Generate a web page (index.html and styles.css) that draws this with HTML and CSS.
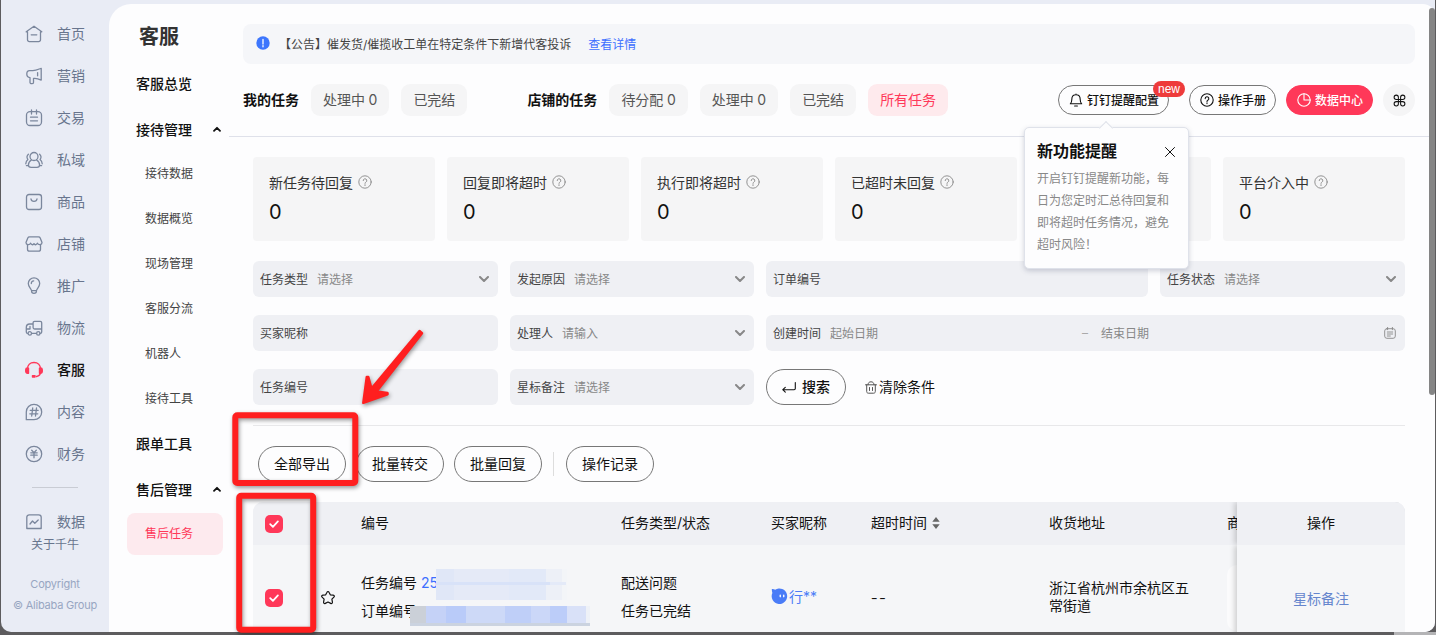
FILE: index.html
```html
<!DOCTYPE html>
<html lang="zh-CN">
<head>
    <meta charset="UTF-8">
    <meta name="viewport" content="width=device-width, initial-scale=1.0">
    <title>客服 - 售后任务</title>
    <link rel="stylesheet" href="styles.css">
</head>
<body>

    <svg width="0" height="0" class="sprite">
        <symbol id="i-help" viewBox="0 0 14 14">
            <circle cx="7" cy="7" r="6.2"/>
            <path d="M5.2 5.6a1.8 1.8 0 1 1 2.6 1.6c-.6.3-.8.6-.8 1.2M7 9.7v.9"/>
        </symbol>
        <symbol id="i-down" viewBox="0 0 10 6">
            <path d="M1 1l4 4 4-4"/>
        </symbol>
        <symbol id="i-up" viewBox="0 0 8 6">
            <path d="M1 4.8l3-3 3 3"/>
        </symbol>
        <symbol id="i-check" viewBox="0 0 18 18">
            <path d="M5.2 9.2l2.7 2.6 5-5.4"/>
        </symbol>
    </svg>

    <div class="window">
        <nav class="menu">
            <a class="menu-item">
                <svg viewBox="0 0 18 18"><path d="M9 1.2L1.2 6.8h1.3v8a1.8 1.8 0 0 0 1.8 1.8h9.4a1.8 1.8 0 0 0 1.8-1.8v-8h1.3zM6.2 9.8h5.6"/></svg>
                <span>首页</span>
            </a>
            <a class="menu-item">
                <svg viewBox="0 0 18 18"><path d="M4.500 3.600h3.300c2.800 0 5-1 8.400-2.300v11.800c-2.500-1.200-4.800-1.700-6.400-1.700H8.500v4c0 1.700-3.500 1.700-3.500 0v-4.800C2.900 10.400 1.800 9 1.800 7c0-2 1.200-3.400 2.700-3.400zM12.600 5.600v3.200"/></svg>
                <span>营销</span>
            </a>
            <a class="menu-item">
                <svg viewBox="0 0 18 18"><rect x="1.5" y="2.6" width="15" height="13.9" rx="3.5"/><path d="M6.500 1v4M11.500 1v4M5.500 8.200h7M5.500 11.800h7"/></svg>
                <span>交易</span>
            </a>
            <a class="menu-item">
                <svg viewBox="0 0 18 18"><circle cx="9" cy="5.500" r="4"/><path d="M6.400 9c-2 1.200-3 3-3 5 0 1.800 1.200 2.300 2.700 2.300h5.800c1.500 0 2.700-.5 2.700-2.300 0-2-1-3.800-3-5M3.400 3.200c-1.800 1.600-1.800 3.800-.5 5.200C1.300 9.700.8 11 .8 12.800M14.600 3.200c1.800 1.600 1.800 3.800.5 5.200 1.600 1.300 2.100 2.600 2.100 4.400M1.400 14.600h2M14.600 14.600h2"/></svg>
                <span>私域</span>
            </a>
            <a class="menu-item">
                <svg viewBox="0 0 18 18"><rect x="1.5" y="1.5" width="15" height="15" rx="2.5"/><path d="M6 6c.4 3.200 5.600 3.200 6 0"/></svg>
                <span>商品</span>
            </a>
            <a class="menu-item">
                <svg viewBox="0 0 18 18"><path d="M4.500 1.800h9c.8 0 1.400.4 1.700 1.100L17 7.400c0 2.600-3.600 3-4.600.8-1 2-2.700 2-3.400.4-.7 1.600-2.400 1.600-3.400-.4C4.600 10.400 1 10 1 7.400l1.800-4.500c.3-.7.9-1.100 1.700-1.100zM2.500 9.700v4.500c0 1.200.8 2 2 2h9c1.200 0 2-.8 2-2V9.700"/></svg>
                <span>店铺</span>
            </a>
            <a class="menu-item">
                <svg viewBox="0 0 18 18"><path d="M6.600 13.600C5.800 11 3.300 9.600 3.300 6.600a5.700 5.700 0 0 1 11.400 0c0 3-2.500 4.400-3.300 7zM6.600 13.600v1c0 1 .8 1.800 2.400 1.800s2.400-.8 2.400-1.800v-1M6.300 6.500c0-1.500 1-2.500 2.400-2.600"/></svg>
                <span>推广</span>
            </a>
            <a class="menu-item">
                <svg viewBox="0 0 18 18"><path d="M7.500 5H4.700C2.500 5 1.300 6.400 1.300 8.500V13c0 .8.5 1.300 1.300 1.300M7 14.300h4.500M15 14.300h.3c.8 0 1.400-.5 1.400-1.300V3.800c0-.9-.6-1.500-1.500-1.500H9.600c-.9 0-1.500.6-1.500 1.500v4.700c0 .9.6 1.500 1.500 1.500h7M1.300 10H5V7.500"/><circle cx="4.8" cy="14.4" r="1.7"/><circle cx="13.3" cy="14.4" r="1.7"/></svg>
                <span>物流</span>
            </a>
            <a class="menu-item active">
                <svg viewBox="0 0 18 18"><path d="M2.500 8C2.500 4 5.200 1.500 9 1.500S15.500 4 15.500 8v3c0 2.300-1.500 4-4 4.500"/><path class="fill" d="M1.300 7.200h2.200v5h-.8c-1.500 0-2-1-2-2.500s.1-1.900.6-2.500zM16.700 7.200h-2.200v5h.8c1.500 0 2-1 2-2.500s-.1-1.900-.6-2.500zM7.500 14.600H10v1.500H7.500z"/></svg>
                <span>客服</span>
            </a>
            <a class="menu-item">
                <svg viewBox="0 0 18 18"><path d="M1.300 16.700V9a7.700 7.700 0 1 1 7.700 7.700zM7.700 5l-1 8M11.500 5l-1 8M5.200 7.300h8M4.800 10.800h8"/></svg>
                <span>内容</span>
            </a>
            <a class="menu-item">
                <svg viewBox="0 0 18 18"><circle cx="9" cy="9" r="7.7"/><path d="M6.700 5.200L9 7.600l2.300-2.400M5.800 7.800h6.400M5.800 10.200h6.400M9 7.800v5"/></svg>
                <span>财务</span>
            </a>
            <hr class="menu-line">
            <a class="menu-item last">
                <svg viewBox="0 0 18 18"><path d="M1.800 15.500V4.300c0-1.500 1-2.500 2.500-2.500h9.400c1.500 0 2.500 1 2.500 2.500v11.200M2.500 15.500h13M5 11l2.500-3 2.300 2.300L13.200 7"/></svg>
                <span>数据</span>
            </a>
            <div class="about">关于千牛</div>
            <div class="copyright">Copyright<br>© Alibaba Group</div>
        </nav>

        <div class="page">
            <aside class="side">
                <h1>客服</h1>
                <a class="side-item">客服总览</a>
                <a class="side-item">接待管理 <svg><use href="#i-up"/></svg></a>
                <div class="side-sub">
                    <a>接待数据</a>
                    <a>数据概览</a>
                    <a>现场管理</a>
                    <a>客服分流</a>
                    <a>机器人</a>
                    <a>接待工具</a>
                </div>
                <a class="side-item">跟单工具</a>
                <a class="side-item">售后管理 <svg><use href="#i-up"/></svg></a>
                <a class="side-active">售后任务</a>
            </aside>

            <main class="content">
                <div class="notice">
                    <svg viewBox="0 0 14 14"><circle cx="7" cy="7" r="6.7"/><path d="M7 3.400v4.700M7 9.600v1.200"/></svg>
                    <span>【公告】催发货/催揽收工单在特定条件下新增代客投诉</span>
                    <a>查看详情</a>
                </div>

                <div class="toolbar">
                    <div class="tabs">
                        <b>我的任务</b>
                        <a>处理中 0</a>
                        <a>已完结</a>
                        <b class="shop">店铺的任务</b>
                        <a>待分配 0</a>
                        <a>处理中 0</a>
                        <a>已完结</a>
                        <a class="on">所有任务</a>
                    </div>
                    <div class="tools">
                        <div class="tool ding">
                            <svg viewBox="0 0 14 14"><path d="M7 1v.8M1.300 10.800c1.200-1 1.500-2 1.500-4.300C2.800 3.800 4.500 1.800 7 1.800s4.200 2 4.200 4.700c0 2.300.3 3.300 1.500 4.300zM5.600 13h2.800"/></svg>
                            <span>钉钉提醒配置</span>
                            <em class="new">new</em>
                            <div class="popover">
                                <div class="popover-head">
                                    <h3>新功能提醒</h3>
                                    <svg viewBox="0 0 10 10"><path d="M.5.5l9 9M9.500.5l-9 9"/></svg>
                                </div>
                                <p>开启钉钉提醒新功能，每日为您定时汇总待回复和即将超时任务情况，避免超时风险！</p>
                            </div>
                        </div>
                        <div class="tool"><svg><use href="#i-help"/></svg><span>操作手册</span></div>
                        <div class="tool primary">
                            <svg viewBox="0 0 14 14"><circle cx="7" cy="7" r="6.2"/><path d="M7 .8V7h6.200"/></svg>
                            <span>数据中心</span>
                        </div>
                        <div class="more">
                            <svg viewBox="0 0 14 14"><path d="M5.800 8.200V3.500a2.300 2.300 0 1 0-2.300 2.300h7a2.300 2.300 0 1 0-2.300-2.300v7a2.300 2.300 0 1 0 2.300-2.300h-7a2.300 2.300 0 1 0 2.300 2.300z"/></svg>
                        </div>
                    </div>
                </div>

                <div class="body">
                    <div class="cards">
                        <div class="card"><div>新任务待回复 <svg><use href="#i-help"/></svg></div><strong>0</strong></div>
                        <div class="card"><div>回复即将超时 <svg><use href="#i-help"/></svg></div><strong>0</strong></div>
                        <div class="card"><div>执行即将超时 <svg><use href="#i-help"/></svg></div><strong>0</strong></div>
                        <div class="card"><div>已超时未回复 <svg><use href="#i-help"/></svg></div><strong>0</strong></div>
                        <div class="card"></div>
                        <div class="card"><div>平台介入中 <svg><use href="#i-help"/></svg></div><strong>0</strong></div>
                    </div>

                    <div class="filters">
                        <div class="field">任务类型 <i>请选择</i><svg class="arrow"><use href="#i-down"/></svg></div>
                        <div class="field">发起原因 <i>请选择</i><svg class="arrow"><use href="#i-down"/></svg></div>
                        <div class="field">订单编号</div>
                        <div class="field">任务状态 <i>请选择</i><svg class="arrow"><use href="#i-down"/></svg></div>
                        <div class="field">买家昵称</div>
                        <div class="field">处理人 <i>请输入</i><svg class="arrow"><use href="#i-down"/></svg></div>
                        <div class="field date">
                            创建时间 <i>起始日期</i><i class="dash">–</i><i class="end">结束日期</i>
                            <svg class="calendar" viewBox="0 0 12 12"><rect x=".7" y="1.7" width="10.6" height="9.6" rx="2.2"/><path d="M3.600.3v2.400M8.400.3v2.400M3.300 5h5.400M3.300 7h5.400M3.300 9h3"/></svg>
                        </div>
                        <div class="field">任务编号</div>
                        <div class="field">星标备注 <i>请选择</i><svg class="arrow"><use href="#i-down"/></svg></div>
                        <div class="actions">
                            <button class="btn search">
                                <svg viewBox="0 0 14 12"><path d="M13.300 1.500v6c0 .8-.4 1.200-1.200 1.200H.8M3.300 6.300L.8 8.700l2.500 2.400"/></svg>
                                搜索
                            </button>
                            <a class="clear">
                                <svg viewBox="0 0 12 13"><path d="M.5 3.800h11M1.700 3.800v6.700c0 1 .6 1.700 1.600 1.700h5.400c1 0 1.600-.7 1.600-1.700V3.800M3 3.800C3 1.800 4.200.8 6 .8s3 1 3 3M4.500 6.500v3M7.500 6.500v3"/></svg>
                                清除条件
                            </a>
                        </div>
                    </div>

                    <div class="batch">
                        <button class="btn">全部导出</button>
                        <button class="btn">批量转交</button>
                        <button class="btn">批量回复</button>
                        <span class="split"></span>
                        <button class="btn">操作记录</button>
                    </div>

                    <div class="table">
                        <div class="row head">
                            <div class="pick"><svg class="check"><use href="#i-check"/></svg></div>
                            <div></div>
                            <div>编号</div>
                            <div>任务类型/状态</div>
                            <div>买家昵称</div>
                            <div>超时时间 <svg class="sort" viewBox="0 0 8 12"><path d="M4 0l3.700 4.800H.3zM4 12L.3 7.200h7.400z"/></svg></div>
                            <div>收货地址</div>
                            <div class="goods">商</div>
                            <div class="fixed">操作</div>
                        </div>
                        <div class="row">
                            <div class="pick"><svg class="check"><use href="#i-check"/></svg></div>
                            <div><svg class="star" viewBox="0 0 16 16"><path d="M8 1.500c.5 0 .8.3 1 .8l1.300 2.500 2.900.4c1.200.2 1.500 1.200.7 2l-2 2 .5 2.900c.2 1.200-.7 1.800-1.700 1.300L8 12l-2.700 1.400c-1 .5-1.900-.1-1.700-1.300l.5-2.900-2-2c-.8-.8-.5-1.800.7-2l2.900-.4L7 2.300c.2-.5.5-.8 1-.8z"/></svg></div>
                            <div class="number">
                                <p>任务编号 <a>25</a></p>
                                <p>订单编号</p>
                                <span class="mask mask-task"></span>
                                <span class="mask mask-order"></span>
                            </div>
                            <div class="lines"><p>配送问题</p><p>任务已完结</p></div>
                            <div class="buyer">
                                <svg viewBox="0 0 16 16"><path d="M.8 1c1.200-.1 2.300.1 3.100.6a7.300 7.300 0 1 1-2.600 3C.9 3.300.7 2.200.8 1z"/><ellipse cx="8.7" cy="7.500" rx=".7" ry="1.4"/><ellipse cx="12" cy="7.500" rx=".7" ry="1.4"/></svg>
                                行**
                            </div>
                            <div class="none">--</div>
                            <div class="address">浙江省杭州市余杭区五常街道</div>
                            <div class="goods"><span class="thumb"></span></div>
                            <div class="fixed"><a>星标备注</a></div>
                        </div>
                    </div>
                </div>
            </main>
            <div class="scrollbar"></div>
        </div>
    </div>

    <!-- red marks over the export button and the checkboxes -->
    <svg class="marks" viewBox="0 0 1436 635">
        <rect x="235.3" y="415.3" width="120" height="67.7" rx="2"/>
        <rect x="239.2" y="495.8" width="74" height="134" rx="2"/>
        <path class="pointer" d="M363.300 402.800L366.800 377L368.300 377L371.500 388.500L419.500 331L422 333.200L376.500 391.500L387.500 393L387.500 394.300z"/>
    </svg>

</body>
</html>
```

FILE: styles.css
```css
* {
    margin: 0;
    padding: 0;
    box-sizing: border-box;
}

body {
    height: 635px;
    overflow: hidden;
    padding: 0 1px 3px;
    background: #5d5c5e;
    background-image: linear-gradient(to right, #5d5c5e 1394px, #b4b4b6 1394px);
    background-size: 100% 3px;
    background-position: bottom;
    background-repeat: no-repeat;
    font-family: Inter, "Noto Sans CJK SC", sans-serif;
    font-size: 14px;
    color: #111;
}

svg {
    fill: none;
    stroke: currentColor;
    flex: none;
    stroke-linecap: round;
    stroke-linejoin: round;
}

.sprite {
    position: absolute;
}

.window {
    display: flex;
    height: 632px;
    background: #e9ecf5;
    border-radius: 0 0 10px 10px;
    overflow: hidden;
}

/* left menu */
.menu {
    width: 108px;
    padding-top: 13px;
    color: #68758d;
}

.menu-item {
    display: flex;
    align-items: center;
    gap: 14px;
    height: 42px;
    padding-left: 24px;
}

.menu-item span {
    padding-bottom: 2px;
}

.menu-item svg {
    width: 18px;
    height: 18px;
    stroke: #7b879d;
    stroke-width: 1.3;
}

.menu-item.active {
    color: #111;
    font-weight: 500;
}

.menu-item.active svg {
    stroke: #ff3859;
    stroke-width: 1.4;
}

.fill {
    fill: #ff3859;
}

.menu-line {
    width: 46px;
    margin: 12px 0 0 31px;
    border: none;
    border-top: 1px solid #c9ccd4;
}

.menu-item.last {
    height: 27px;
    margin-top: 20px;
}

.about {
    height: 32px;
    margin-bottom: 7px;
    line-height: 20px;
    text-align: center;
    font-size: 12px;
}

.copyright {
    text-align: center;
    font-size: 11px;
    line-height: 21px;
    letter-spacing: -0.2px;
    color: #98a6c2;
    white-space: nowrap;
}

.page {
    position: relative;
    display: flex;
    flex: 1;
    margin-top: 4px;
    background: #fdfdfe;
    border-radius: 22px 12px 0 0;
}

/* service submenu */
.side {
    width: 120px;
    padding-left: 18px;
}

.side h1 {
    height: 57px;
    padding: 18px 0 0 12px;
    font-size: 20px;
    line-height: 30px;
    font-weight: 700;
    color: #333;
}

.side-item {
    display: flex;
    align-items: center;
    justify-content: space-between;
    height: 46px;
    padding: 0 8px 2px 9px;
    font-weight: 500;
}

.side-item svg {
    width: 8px;
    height: 6px;
    stroke-width: 1.8;
}

.side-sub {
    margin-top: -2px;
}

.side-sub a {
    display: block;
    padding-left: 18px;
    line-height: 45px;
    font-size: 12px;
    color: #444;
}

.side-active {
    display: block;
    width: 96px;
    padding-left: 18px;
    line-height: 42px;
    font-size: 12px;
    color: #ff3859;
    background: #fdeaee;
    border-radius: 8px;
}

.content {
    width: 1200px;
    padding-top: 20px;
}

.notice {
    display: flex;
    align-items: center;
    height: 40px;
    margin: 0 14px;
    padding: 0 0 2px 13px;
    background: #f5f6f9;
    border-radius: 8px;
    font-size: 12px;
    color: #444;
}

.notice svg {
    width: 14px;
    height: 14px;
    margin-right: 9px;
    fill: #3d76fd;
    stroke: #fff;
    stroke-width: 1.3;
}

.notice circle {
    stroke: none;
}

.notice a {
    margin-left: 17px;
    color: #3d6fff;
}

.toolbar {
    display: flex;
    justify-content: space-between;
    height: 73px;
    padding: 20px 14px 0;
    border-bottom: 1px solid #dfe1ea;
}

.tabs,
.tools {
    display: flex;
    align-items: center;
    height: 32px;
}

.tabs {
    gap: 12px;
    word-spacing: -0.4px;
}

.tabs b {
    padding-bottom: 2px;
    font-weight: 700;
}

.tabs .shop {
    margin-left: 48px;
}

.tabs a {
    padding: 0 12px 1px;
    line-height: 31px;
    color: #555;
    background: #f5f5f6;
    border-radius: 9px;
}

.tabs .on {
    color: #ff3859;
    background: #feeaed;
}

.tools {
    gap: 10px;
}

.tool {
    display: flex;
    align-items: center;
    gap: 4px;
    width: 87px;
    height: 30px;
    padding: 0 10px;
    border: 1px solid #777;
    border-radius: 15px;
    font-size: 12px;
    font-weight: 500;
    white-space: nowrap;
}

.tool span {
    padding-bottom: 2px;
}

.tool svg,
.more svg {
    width: 14px;
    height: 14px;
    stroke-width: 1.1;
}

.primary {
    color: #fff;
    background: #ff3859;
    border-color: #ff3859;
}

.more {
    display: flex;
    align-items: center;
    justify-content: center;
    width: 32px;
    height: 32px;
    background: #f5f5f6;
    border-radius: 50%;
}

.more svg {
    width: 13px;
    height: 13px;
}

.ding {
    position: relative;
    width: 111px;
    margin-right: 10px;
}

.new {
    position: absolute;
    top: -5px;
    right: -17px;
    width: 32px;
    border-radius: 8px;
    background: #ee3b3b;
    color: #fff;
    font-family: "Liberation Sans", sans-serif;
    font-size: 12px;
    font-style: normal;
    font-weight: 400;
    line-height: 16px;
    text-align: center;
}

.popover {
    position: absolute;
    z-index: 2;
    top: 41px;
    left: -35px;
    width: 165px;
    height: 142px;
    padding: 12px;
    background: #fdfdfe;
    border: 1px solid #dfe2ea;
    border-radius: 5px;
    box-shadow: 0 2px 5px rgba(70, 80, 110, 0.25);
    white-space: normal;
}

.popover::before {
    content: "";
    position: absolute;
    top: -5px;
    left: 76px;
    width: 9px;
    height: 9px;
    background: #fdfdfe;
    border: 1px solid #dfe2ea;
    border-width: 1px 0 0 1px;
    transform: rotate(45deg);
}

.popover-head {
    display: flex;
    align-items: center;
    justify-content: space-between;
    height: 24px;
    padding-right: 1px;
}

.popover h3 {
    padding-bottom: 4px;
    font-size: 16px;
    font-weight: 700;
}

.popover-head svg {
    width: 10px;
    height: 10px;
    stroke-width: 1;
}

.popover p {
    margin-top: 4px;
    width: 133px;
    line-height: 22px;
    font-weight: 400;
    color: #888;
}

.body {
    padding: 20px 24px 0;
}

.cards {
    display: grid;
    grid-template-columns: repeat(6, 1fr);
    gap: 12px;
}

.card {
    height: 84px;
    padding: 15px 16px;
    background: #f5f5f6;
    border-radius: 4px;
    color: #333;
}

.card div {
    display: flex;
    align-items: center;
    gap: 5px;
    height: 20px;
}

.card svg {
    width: 14px;
    height: 14px;
    color: #888;
    stroke-width: 0.9;
}

.card strong {
    display: block;
    margin-top: 5px;
    font-size: 20px;
    line-height: 30px;
    font-weight: 400;
    color: #111;
}

.filters {
    display: grid;
    grid-template-columns: 245px 244px 382px 245px;
    gap: 18px 12px;
    padding: 20px 0;
    border-bottom: 1px solid #e8e8ea;
}

.field {
    display: flex;
    align-items: center;
    height: 36px;
    padding: 0 9px 2px 7px;
    background: #eff0f4;
    border-radius: 6px;
    font-size: 12px;
    color: #444;
}

.field i {
    padding-top: 1px;
    margin-left: 9px;
    font-style: normal;
    color: #888;
}

.arrow {
    width: 10px;
    height: 6px;
    margin: 2px 0 0 auto;
    color: #888;
    stroke-width: 2;
}

.date {
    grid-column: span 2;
}

.field .dash {
    width: 8px;
    margin-left: 204px;
    color: #aaa;
}

.field .end {
    margin-left: 11px;
}

.calendar {
    width: 12px;
    height: 12px;
    margin: 2px 0 0 auto;
    color: #888;
    stroke-width: 0.9;
}

.actions {
    display: flex;
    align-items: center;
}

.btn {
    display: flex;
    align-items: center;
    justify-content: center;
    width: 88px;
    height: 36px;
    padding-bottom: 2px;
    background: none;
    border: 1px solid #777;
    border-radius: 18px;
    font-family: inherit;
    font-size: 14px;
    font-weight: 400;
    color: #111;
}

.search {
    gap: 6px;
    width: 80px;
    margin-right: 19px;
    font-weight: 500;
}

.search svg {
    width: 14px;
    height: 12px;
    margin-top: 2px;
    stroke-width: 1.1;
}

.clear {
    display: flex;
    align-items: center;
    gap: 2px;
    padding-bottom: 2px;
}

.clear svg {
    width: 12px;
    height: 13px;
    margin-top: 2px;
    color: #555;
}

.batch {
    display: flex;
    align-items: center;
    gap: 10px;
    padding: 20px 5px;
}

.split {
    width: 1px;
    height: 24px;
    margin: 0 2px 0 1px;
    background: #ddd;
}

/* task table */
.table {
    border-radius: 10px 10px 0 0;
    overflow: hidden;
    background: #f5f6f8;
}

.row {
    display: grid;
    grid-template-columns: 60px 48px 260px 150px 100px 178px 178px 10px 168px;
    align-items: center;
    height: 106px;
}

.row.head {
    height: 43px;
    background: #eff0f4;
}

.head > div {
    padding-bottom: 3px;
}

.pick {
    padding-left: 12px;
}

.head > .pick {
    padding-bottom: 0;
}

.check {
    display: block;
    width: 18px;
    height: 18px;
    background: #ff3859;
    border-radius: 5px;
    color: #fff;
    stroke-width: 1.8;
}

.star {
    display: block;
    width: 16px;
    height: 16px;
    margin-left: 7px;
    stroke-width: 1.2;
}

.sort {
    width: 8px;
    height: 12px;
    margin-left: 1px;
    vertical-align: -1px;
    fill: #666;
    stroke: none;
}

.number {
    position: relative;
    padding-bottom: 2px;
    line-height: 28px;
}

.number a {
    color: #3d6fff;
}

.mask {
    position: absolute;
}

.mask-task {
    top: 0;
    left: 75px;
    width: 131px;
    height: 31px;
    background: linear-gradient(to right, #e0e7f7 0 14%, #e5eaf7 14% 56%, #e2e9f8 56% 84%, #edf0f7 84% 96%, #f3f5f8 96%);
}

.mask-task::after {
    content: "";
    display: block;
    width: 130px;
    height: 3px;
    margin-top: 13px;
    background: linear-gradient(to right, #d8e2f8 0 88%, #e4eaf8 88%);
}

.mask-order {
    top: 37px;
    left: 49px;
    width: 180px;
    height: 20px;
    background: linear-gradient(to right, #cbd0d8 0 9%, #c5d2f7 9% 20%, #b9cbf9 20% 31%, #cdd9f7 31% 53%, #bfcff8 53% 67%, #cbd7f8 67% 78%, #bccdf9 78% 87%, #d9e1f8 87% 98%, #eef1f7 98%);
    border-bottom: 3px solid #cbd3e0;
}

.lines {
    padding-bottom: 2px;
    line-height: 28px;
}

.buyer {
    display: flex;
    align-items: center;
    gap: 1px;
    padding-bottom: 5px;
    color: #4a7cf7;
}

.buyer svg {
    width: 17px;
    height: 17px;
    margin-top: 2px;
    fill: #4a7cf7;
    stroke: none;
}

.buyer ellipse {
    fill: #fff;
}

.none {
    padding-bottom: 2px;
    font-family: "Noto Sans", sans-serif;
    font-size: 20px;
    letter-spacing: 1.8px;
    line-height: 20px;
    font-weight: 300;
}

.address {
    width: 142px;
    padding-bottom: 2px;
    line-height: 18px;
}

.goods {
    white-space: nowrap;
}

.thumb {
    display: block;
    height: 66px;
    background: #fbfbfc;
    border-radius: 10px 0 0 10px;
}

.fixed {
    display: flex;
    align-items: center;
    justify-content: center;
    height: 100%;
    background: #f5f6f8;
    box-shadow: -2px 0 6px rgba(0, 0, 0, 0.2);
    clip-path: inset(0 0 0 -8px);
    z-index: 1;
}

.head .fixed {
    background: #eff0f4;
}

.fixed a {
    color: #6485cd;
}

.scrollbar {
    position: absolute;
    top: 4px;
    right: 0;
    width: 6px;
    height: 387px;
    background: #858585;
    border-radius: 3px;
}

.marks {
    position: absolute;
    top: 0;
    left: 0;
    z-index: 5;
    width: 1436px;
    height: 635px;
    stroke: #ff1f1f;
    stroke-width: 6;
    filter: drop-shadow(1px 2px 2px rgba(0, 0, 0, 0.4));
}

.marks .pointer {
    fill: #ff1f1f;
    stroke-width: 2.5;
}
```
